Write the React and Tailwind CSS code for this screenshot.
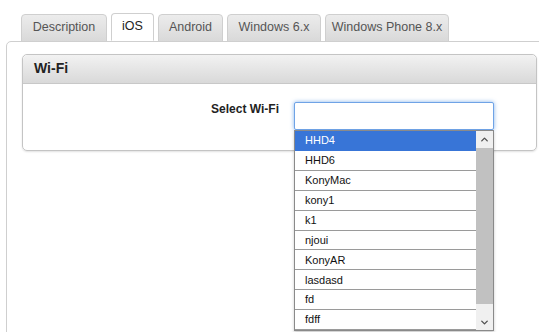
import React from 'react';
import { ChevronUp, ChevronDown } from 'lucide-react';

const tabs = [
  { label: 'Description', w: 'w-[86px]' },
  { label: 'iOS', w: 'w-[43px]', active: true },
  { label: 'Android', w: 'w-[65px]' },
  { label: 'Windows 6.x', w: 'w-[94px]' },
  { label: 'Windows Phone 8.x', w: 'w-[124px]' },
];

const networks = ['HHD4', 'HHD6', 'KonyMac', 'kony1', 'k1', 'njoui', 'KonyAR', 'lasdasd', 'fd', 'fdff'];

function App() {
  return (
    <div className="relative w-[539px] h-[332px] overflow-hidden bg-white font-['Liberation_Sans',Arial,sans-serif]">
      {/* tabs */}
      <div className="flex gap-[4px] pl-[21px] pt-[13px] relative z-10">
        {tabs.map((t) => (
          <div
            key={t.label}
            className={`${t.w} h-[28px] -mb-px flex items-center justify-center rounded-t-[4px] border border-[#cfcfcf] text-[12.5px] pb-[1px] ${
              t.active
                ? 'bg-white border-b-white text-[#222]'
                : 'bg-gradient-to-b from-[#ececec] to-[#d9d9d9] text-[#555] h-[27px] mt-px'
            }`}
          >
            {t.label}
          </div>
        ))}
      </div>

      {/* content */}
      <div className="ml-[6px] w-[560px] h-[300px] border border-[#cfcfcf] rounded-tl-[5px] pt-[12px] pl-[15px]">
        <div className="w-[515px] border border-[#c4c4c4] rounded-[5px] shadow-[0_1px_2px_rgba(0,0,0,0.12)]">
          <div className="h-[29px] flex items-center pl-[11px] pb-[1px] rounded-t-[5px] border-b border-[#c8c8c8] bg-gradient-to-b from-[#f2f2f2] to-[#d9d9d9] text-[14px] font-bold text-[#222]">
            Wi-Fi
          </div>
          <div className="h-[66px] flex items-start pt-[18px]">
            <div className="w-[256px] text-right text-[12px] font-bold text-[#222] -mt-[2px]">Select Wi-Fi</div>
            <div className="relative ml-[15px]">
              <div className="w-[200px] h-[28px] bg-white border border-[#6fa3e6] rounded-[2px] shadow-[0_0_4px_rgba(82,148,230,0.7)]" />
              {/* dropdown list */}
              <div className="absolute left-0 top-[28px] w-[200px] h-[201px] flex bg-white border border-[#8a8a8a] shadow-[0_2px_3px_rgba(0,0,0,0.2)] z-20">
                <div className="flex-1 flex flex-col">
                  {networks.map((n, i) => (
                    <div
                      key={n}
                      className={`h-[20px] flex items-center pl-[10px] text-[11px] border-b border-[#9a9a9a] ${
                        i === 0 ? 'bg-[#3875d7] text-white border-b-[#3875d7]' : 'text-[#111]'
                      }`}
                    >
                      {n}
                    </div>
                  ))}
                </div>
                <div className="w-[17px] flex flex-col bg-[#f0f0f0]">
                  <div className="h-[17px] flex items-center justify-center text-[#505050]">
                    <ChevronUp size={11} strokeWidth={3} />
                  </div>
                  <div className="h-[156px] bg-[#c1c1c1]" />
                  <div className="flex-1 flex items-end justify-center pb-[2px] text-[#505050]">
                    <ChevronDown size={11} strokeWidth={3} />
                  </div>
                </div>
              </div>
            </div>
          </div>
        </div>
      </div>
    </div>
  );
}

export default App;
